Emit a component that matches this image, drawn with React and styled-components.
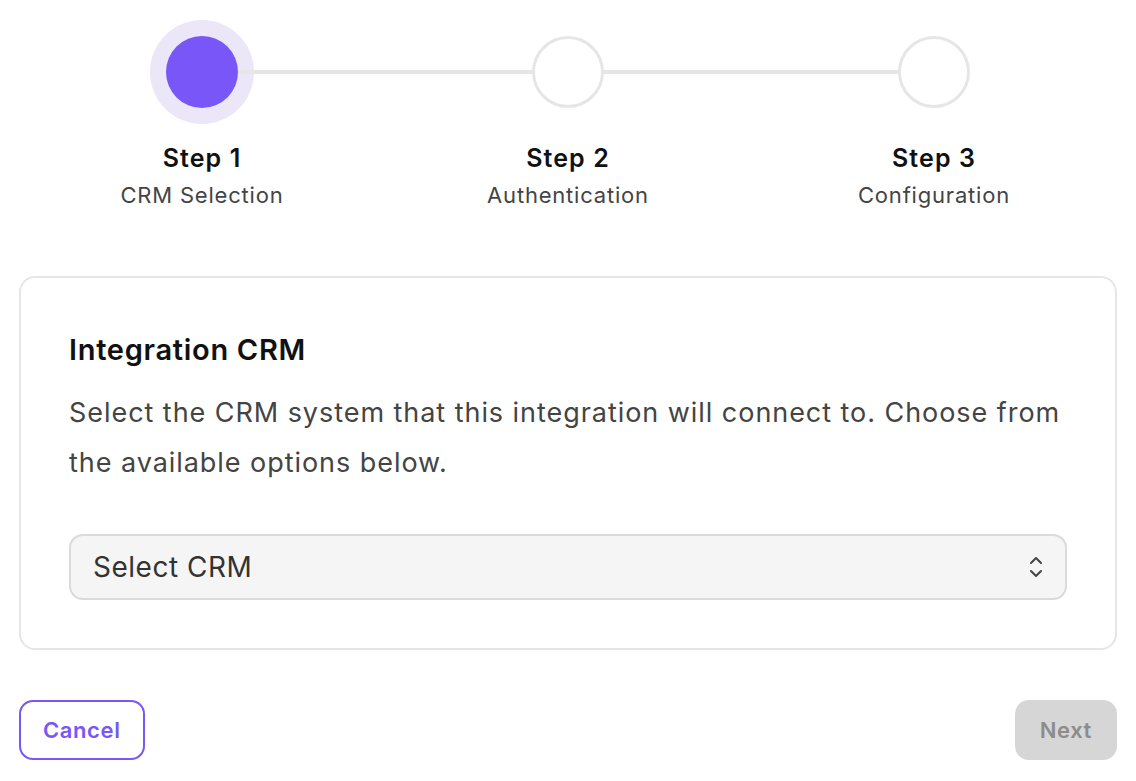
import React from "react";
import styled, { createGlobalStyle } from "styled-components";

const Global = createGlobalStyle`
  html, body { margin: 0; padding: 0; background: #ffffff; }
  body { font-family: Inter, "Noto Sans", "Liberation Sans", sans-serif; color: #111; -webkit-font-smoothing: antialiased; }
  * { box-sizing: border-box; }
`;

const Page = styled.div`
  width: 1136px;
  padding: 36px 19px 0 19px;
`;

const Stepper = styled.div`
  display: grid;
  grid-template-columns: repeat(3, 1fr);
`;

const Step = styled.div`
  position: relative;
  display: flex;
  flex-direction: column;
  align-items: center;
`;

const Connector = styled.div`
  position: absolute;
  top: 34px;
  left: 50%;
  width: 100%;
  height: 4px;
  background: #e6e6e6;
  z-index: 1;
`;

const CircleSlot = styled.div`
  position: relative;
  width: 72px;
  height: 72px;
  &::before {
    content: "";
    display: ${(p) => (p.$active ? "block" : "none")};
    position: absolute;
    inset: -16px;
    border-radius: 50%;
    background: #ebe7f8;
    z-index: 0;
  }
`;

const Circle = styled.div`
  position: relative;
  z-index: 2;
  width: 72px;
  height: 72px;
  border-radius: 50%;
  background: ${(p) => (p.$active ? "#7856f7" : "#ffffff")};
  border: ${(p) => (p.$active ? "none" : "3px solid #e6e6e6")};
`;

const StepTitle = styled.div`
  margin-top: 35px;
  font-size: 25px;
  line-height: 30px;
  font-weight: 600;
  letter-spacing: 1.1px;
  color: #111;
`;

const StepSub = styled.div`
  margin-top: 8px;
  font-size: 22px;
  line-height: 28px;
  letter-spacing: 0.8px;
  color: #444;
`;

const Card = styled.section`
  margin-top: 67px;
  border: 2px solid #e6e6e6;
  border-radius: 16px;
  padding: 52px 48px 48px 48px;
`;

const CardTitle = styled.h2`
  margin: 0;
  font-size: 29px;
  line-height: 40px;
  font-weight: 600;
  letter-spacing: 0.7px;
  color: #111;
`;

const CardText = styled.p`
  margin: 18px 0 0 0;
  font-size: 27px;
  line-height: 50px;
  letter-spacing: 0.95px;
  color: #444;
`;

const SelectBox = styled.div`
  margin-top: 46px;
  height: 66px;
  display: flex;
  align-items: center;
  justify-content: space-between;
  padding: 0 21px 0 22px;
  background: #f5f5f5;
  border: 2px solid #dadada;
  border-radius: 14px;
  font-size: 28px;
  letter-spacing: 0.5px;
  color: #333;
`;

const Footer = styled.div`
  margin-top: 50px;
  display: flex;
  justify-content: space-between;
`;

const Button = styled.button`
  height: 60px;
  padding: 0 ${(p) => (p.$primary ? "23px" : "22px")};
  border-radius: 14px;
  font-family: inherit;
  font-size: 22px;
  font-weight: 600;
  letter-spacing: 0.6px;
  cursor: pointer;
  border: 2px solid ${(p) => (p.$primary ? "#d6d6d6" : "#7856f7")};
  background: ${(p) => (p.$primary ? "#d6d6d6" : "#ffffff")};
  color: ${(p) => (p.$primary ? "#8c8c8c" : "#7856f7")};
`;

const steps = [
  { title: "Step 1", sub: "CRM Selection" },
  { title: "Step 2", sub: "Authentication" },
  { title: "Step 3", sub: "Configuration" },
];

const Chevrons = () => (
  <svg width="16" height="22" viewBox="0 0 16 22" fill="none" stroke="#444" strokeWidth="2" strokeLinecap="round" strokeLinejoin="round">
    <path d="M3 7 L8 2 L13 7" />
    <path d="M3 15 L8 20 L13 15" />
  </svg>
);

export default function App() {
  return (
    <>
      <Global />
      <Page>
        <Stepper>
          {steps.map((s, i) => (
            <Step key={s.title}>
              {i < steps.length - 1 && <Connector />}
              <CircleSlot $active={i === 0}>
                <Circle $active={i === 0} />
              </CircleSlot>
              <StepTitle>{s.title}</StepTitle>
              <StepSub>{s.sub}</StepSub>
            </Step>
          ))}
        </Stepper>
        <Card>
          <CardTitle>Integration CRM</CardTitle>
          <CardText>
            Select the CRM system that this integration will connect to. Choose from the available options below.
          </CardText>
          <SelectBox>
            <span>Select CRM</span>
            <Chevrons />
          </SelectBox>
        </Card>
        <Footer>
          <Button>Cancel</Button>
          <Button $primary disabled>Next</Button>
        </Footer>
      </Page>
    </>
  );
}
